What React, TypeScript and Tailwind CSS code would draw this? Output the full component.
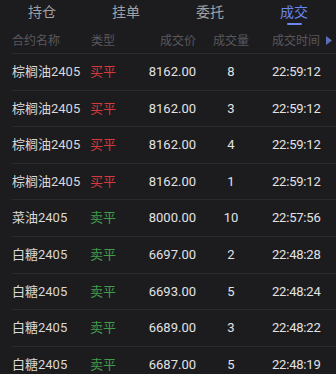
import React from 'react';

type Trade = { name: string; side: 'buy' | 'sell'; price: string; qty: number; time: string };

const trades: Trade[] = [
  { name: '棕榈油2405', side: 'buy', price: '8162.00', qty: 8, time: '22:59:12' },
  { name: '棕榈油2405', side: 'buy', price: '8162.00', qty: 3, time: '22:59:12' },
  { name: '棕榈油2405', side: 'buy', price: '8162.00', qty: 4, time: '22:59:12' },
  { name: '棕榈油2405', side: 'buy', price: '8162.00', qty: 1, time: '22:59:12' },
  { name: '菜油2405', side: 'sell', price: '8000.00', qty: 10, time: '22:57:56' },
  { name: '白糖2405', side: 'sell', price: '6697.00', qty: 2, time: '22:48:28' },
  { name: '白糖2405', side: 'sell', price: '6693.00', qty: 5, time: '22:48:24' },
  { name: '白糖2405', side: 'sell', price: '6689.00', qty: 3, time: '22:48:22' },
  { name: '白糖2405', side: 'sell', price: '6687.00', qty: 5, time: '22:48:19' },
];

const tabs = ['持仓', '挂单', '委托', '成交'];

export default function App() {
  return (
    <div
      className="w-[336px] h-[374px] overflow-hidden bg-[#1c1c1f] text-[#dedede]"
      style={{ fontFamily: 'Roboto, "Noto Sans CJK SC", sans-serif' }}
    >
      {/* Tabs */}
      <div className="flex h-[28px]">
        {tabs.map((t, i) => (
          <div key={t} className="flex-1 flex flex-col items-center justify-center">
            <span className={`text-[14px] leading-[18px] ${i === 3 ? 'text-[#6a86f0]' : 'text-[#a0a0a3]'}`}>{t}</span>
            {i === 3 ? (
              <div className="w-[15px] h-[2px] bg-[#6a86f0] mt-[2px] rounded-full" />
            ) : (
              <div className="h-[2px] mt-[2px]" />
            )}
          </div>
        ))}
      </div>

      {/* Column header */}
      <div className="ml-3 flex h-[26px] items-center border-b border-[#2c2c30] text-[12px] text-[#58585d]">
        <div className="w-[76px]">合约名称</div>
        <div className="w-[30px] text-center">类型</div>
        <div className="w-[78px] text-right">成交价</div>
        <div className="w-[70px] text-center">成交量</div>
        <div className="flex-1 pl-[6px] flex items-center">
          <span>成交时间</span>
          <svg width="6" height="9" viewBox="0 0 6 9" className="ml-[6px]">
            <path d="M0 0L6 4.5L0 9Z" fill="#5b6fb8" />
          </svg>
        </div>
      </div>

      {/* Rows */}
      {trades.map((r, i) => (
        <div key={i} className="ml-3 flex h-[36.6px] items-center border-b border-[#2a2a2e] text-[13px]">
          <div className="w-[76px] text-[#d8d8d8]">{r.name}</div>
          <div className={`w-[30px] text-center ${r.side === 'buy' ? 'text-[#d8393c]' : 'text-[#3f9d4c]'}`}>
            {r.side === 'buy' ? '买平' : '卖平'}
          </div>
          <div className="w-[78px] text-right text-[#e2e2e2]">{r.price}</div>
          <div className="w-[70px] text-center text-[#e2e2e2]">{r.qty}</div>
          <div className="flex-1 pl-[6px] text-[#e2e2e2] tracking-[-0.2px]">{r.time}</div>
        </div>
      ))}
    </div>
  );
}
